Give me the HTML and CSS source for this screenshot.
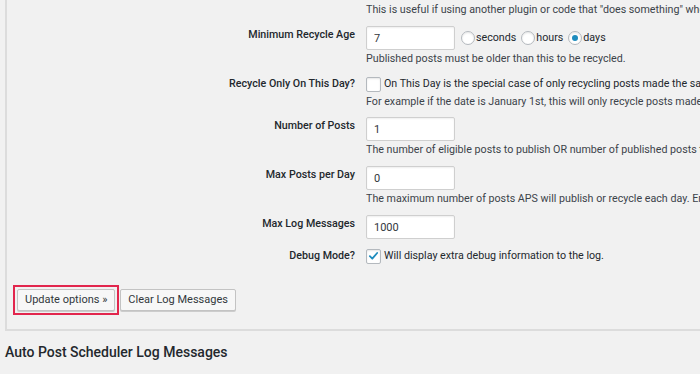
FILE: index.html
```html
<!DOCTYPE html>
<html lang="en">
<head>
    <meta charset="UTF-8">
    <title>Auto Post Scheduler</title>
    <link rel="stylesheet" href="styles.css">
</head>
<body>
    <div class="wrap">
        <form class="options-box">
            <div class="form-rows">
                <!-- row cut off by the top of the window -->
                <div class="row">
                    <div class="label">Ignore Publish Hooks?</div>
                    <div class="field">
                        <div class="line"><span class="checkbox"></span> Skip the publish action for scheduled posts.</div>
                        <p class="desc">This is useful if using another plugin or code that "does something" when a post is published and you do not want it to run.</p>
                    </div>
                </div>

                <div class="row">
                    <div class="label">Minimum Recycle Age</div>
                    <div class="field">
                        <div class="line">
                            <input class="text-input" type="text" value="7">
                            <span class="radio"></span>seconds
                            <span class="radio"></span>hours
                            <span class="radio checked"></span>days
                        </div>
                        <p class="desc">Published posts must be older than this to be recycled.</p>
                    </div>
                </div>

                <div class="row">
                    <div class="label">Recycle Only On This Day?</div>
                    <div class="field">
                        <div class="line"><span class="checkbox"></span> On This Day is the special case of only recycling posts made the same day in previous years.</div>
                        <p class="desc">For example if the date is January 1st, this will only recycle posts made on January 1st of any year.</p>
                    </div>
                </div>

                <div class="row">
                    <div class="label">Number of Posts</div>
                    <div class="field">
                        <input class="text-input" type="text" value="1">
                        <p class="desc">The number of eligible posts to publish OR number of published posts to recycle at each interval.</p>
                    </div>
                </div>

                <div class="row">
                    <div class="label">Max Posts per Day</div>
                    <div class="field">
                        <input class="text-input" type="text" value="0">
                        <p class="desc">The maximum number of posts APS will publish or recycle each day. Enter 0 for unlimited.</p>
                    </div>
                </div>

                <div class="row">
                    <div class="label">Max Log Messages</div>
                    <div class="field">
                        <input class="text-input" type="text" value="1000">
                    </div>
                </div>

                <div class="row">
                    <div class="label">Debug Mode?</div>
                    <div class="field">
                        <div class="line">
                            <span class="checkbox checked">
                                <svg viewBox="0 0 16 16" width="14" height="14"><path d="M3.5 8.2l3 3.1 6-7" fill="none" stroke="#1e8cbe" stroke-width="2.2" stroke-linecap="round" stroke-linejoin="round"/></svg>
                            </span> Will display extra debug information to the log.
                        </div>
                    </div>
                </div>
            </div>

            <div class="actions">
                <span class="highlight"><button type="button" class="button">Update options &raquo;</button></span>
                <button type="button" class="button">Clear Log Messages</button>
            </div>
        </form>

        <h2 class="log-title">Auto Post Scheduler Log Messages</h2>
    </div>
</body>
</html>
```

FILE: styles.css
```css
body {
    margin: 0;
    background: #f1f1f1;
    color: #23282d;
    font-family: Roboto, "Open Sans", Arial, sans-serif;
    font-size: 10.7px;
    overflow: hidden;
    height: 374px;
}

.wrap {
    width: 900px;
}

/* Settings box, its top and right edges are off screen */
.options-box {
    margin: -21px 0 0 5px;
    border-left: 2px solid #dcdcdc;
    border-bottom: 2px solid #dcdcdc;
    padding-bottom: 14px;
}

.row {
    display: grid;
    grid-template-columns: 348px 1fr;
    column-gap: 11px;
    padding: 4px 0;
}

.row:nth-child(4) {
    padding-top: 3px;
}

.label {
    text-align: right;
    font-weight: 500;
    line-height: 18px;
    white-space: nowrap;
}

.field {
    white-space: nowrap;
    line-height: 18px;
}

.line {
    display: flex;
    align-items: center;
}

.desc {
    margin: 0;
    line-height: 17px;
    color: #3c434a;
}

.text-input {
    box-sizing: border-box;
    width: 89px;
    height: 24px;
    margin: 0;
    padding: 0 7px;
    border: 1px solid #cfcfcf;
    border-radius: 2px;
    box-shadow: inset 0 1px 2px rgba(0, 0, 0, 0.07);
    background: #fff;
    color: #32373c;
    font-family: inherit;
    font-size: 11px;
    vertical-align: top;
}

.line .text-input {
    margin-right: 6px;
}

.checkbox {
    box-sizing: border-box;
    display: inline-flex;
    align-items: center;
    justify-content: center;
    width: 15px;
    height: 15px;
    margin-right: 3px;
    border: 1px solid #b4b9be;
    border-radius: 2px;
    background: #fff;
    box-shadow: inset 0 1px 2px rgba(0, 0, 0, 0.1);
}

.radio {
    box-sizing: border-box;
    display: inline-flex;
    align-items: center;
    justify-content: center;
    width: 14px;
    height: 14px;
    margin: 0 1px 0 0;
    border: 1px solid #b4b9be;
    border-radius: 50%;
    background: #fff;
    box-shadow: inset 0 1px 2px rgba(0, 0, 0, 0.1);
}

.radio ~ .radio {
    margin-left: 5px;
}

.radio.checked::before {
    content: "";
    width: 6px;
    height: 6px;
    border-radius: 50%;
    background: #1e8cbe;
}

.actions {
    display: flex;
    align-items: center;
    gap: 1px;
    padding: 16px 0 0 6px;
}

.highlight {
    display: inline-flex;
    padding: 2px;
    border: 2px solid #e2264d;
}

.button {
    height: 22px;
    margin: 0;
    padding: 0 7px;
    border: 1px solid #c3c3c3;
    border-radius: 2px;
    background: #f7f7f7;
    box-shadow: 0 1px 0 #ccc;
    color: #32373c;
    font-family: inherit;
    font-size: 11px;
    line-height: 20px;
}

.log-title {
    margin: 13px 0 0 5px;
    font-size: 14px;
    font-weight: 500;
    color: #23282d;
}
```
